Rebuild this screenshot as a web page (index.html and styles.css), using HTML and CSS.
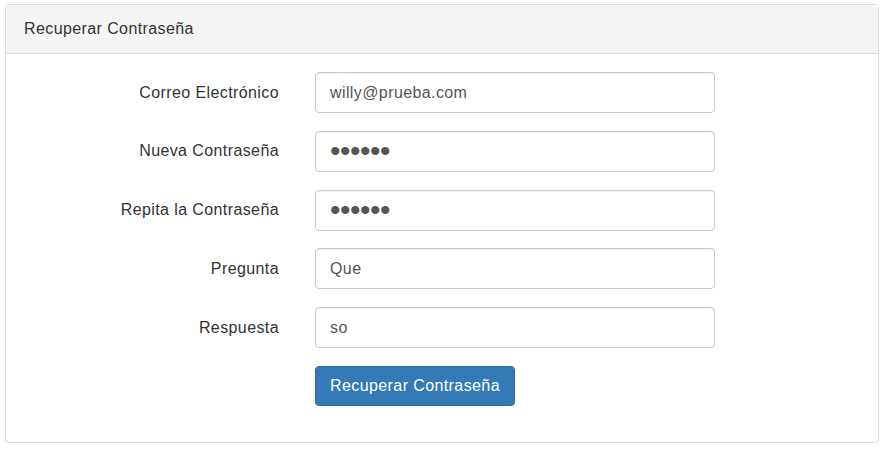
FILE: index.html
```html
<!DOCTYPE html>
<html>
<head>
<meta charset="utf-8">
<link rel="stylesheet" href="styles.css">
</head>
<body>
<div class="panel">
  <div class="panel-heading">Recuperar Contraseña</div>
  <div class="panel-body">
    <form class="form">
      <div class="row">
        <label class="lbl">Correo Electrónico</label>
        <input class="ctrl" type="text" value="willy@prueba.com">
      </div>
      <div class="row">
        <label class="lbl">Nueva Contraseña</label>
        <input class="ctrl pwd" type="password" value="123456">
      </div>
      <div class="row">
        <label class="lbl">Repita la Contraseña</label>
        <input class="ctrl pwd" type="password" value="123456">
      </div>
      <div class="row">
        <label class="lbl">Pregunta</label>
        <input class="ctrl" type="text" value="Que">
      </div>
      <div class="row">
        <label class="lbl">Respuesta</label>
        <input class="ctrl" type="text" value="so">
      </div>
      <div class="row">
        <span class="lbl"></span>
        <button class="btn" type="button">Recuperar Contraseña</button>
      </div>
    </form>
  </div>
</div>
</body>
</html>
```
FILE: styles.css
```css
html, body { margin: 0; padding: 0; background: #fff; }
body {
  font-family: "Liberation Sans", Arial, sans-serif;
  font-size: 16px;
  letter-spacing: 0.4px;
  color: #333;
  padding: 4px 5px 0 5px;
}
.panel {
  border: 1px solid #ddd;
  border-radius: 4px;
  box-shadow: 0 1px 1px rgba(0,0,0,0.05);
  background: #fff;
  box-sizing: border-box;
  width: 874px;
}
.panel-heading {
  background: #f5f5f5;
  border-bottom: 1px solid #ddd;
  border-radius: 3px 3px 0 0;
  height: 49px;
  box-sizing: border-box;
  padding: 0 18px;
  display: flex;
  align-items: center;
  font-size: 16px;
  color: #333;
}
.panel-body {
  padding: 18px 0 36px 0;
}
.form {
  display: flex;
  flex-direction: column;
  gap: 17.8px;
}
.row {
  display: flex;
  align-items: center;
}
.lbl {
  width: 273px;
  text-align: right;
  padding-right: 36px;
  color: #333;
  font-size: 16px;
}
.ctrl {
  width: 400px;
  height: 41px;
  box-sizing: border-box;
  border: 1px solid #ccc;
  border-radius: 4px;
  padding: 0 14px;
  font-family: "Liberation Sans", Arial, sans-serif;
  font-size: 16px;
  letter-spacing: 0.4px;
  color: #555;
  box-shadow: inset 0 1px 1px rgba(0,0,0,0.075);
  outline: none;
  margin: 0;
}
.pwd {
  font-size: 30px;
  letter-spacing: -0.5px;
  padding: 0 14px;
}
.btn {
  width: 200px;
  height: 40px;
  box-sizing: border-box;
  background: #337ab7;
  border: 1px solid #2e6da4;
  border-radius: 4px;
  color: #fff;
  font-family: "Liberation Sans", Arial, sans-serif;
  font-size: 16px;
  letter-spacing: 0.4px;
  padding: 0;
  margin: 0;
}
```
